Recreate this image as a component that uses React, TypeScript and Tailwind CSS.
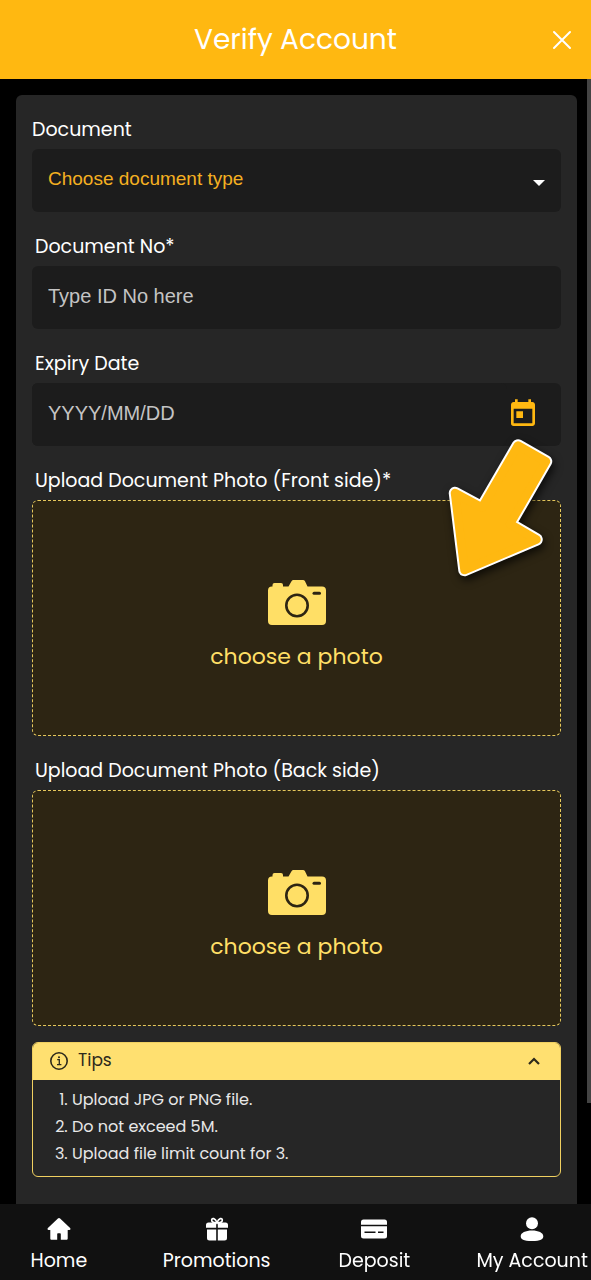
import { useState, type ReactNode } from "react";
import { MdToday } from "react-icons/md";

const CloseIcon = () => (
  <svg className="size-5" viewBox="0 0 20 20" fill="none" stroke="currentColor" strokeWidth="2" strokeLinecap="round">
    <path d="M2 2 18 18M18 2 2 18" />
  </svg>
);

const CameraIcon = () => (
  <svg className="h-[45px] w-[58px]" viewBox="0 0 58 45">
    <path
      fill="currentColor"
      d="M4.500 6.500V5a2 2 0 0 1 2-2h6.500a2 2 0 0 1 2 2v1.500h5.500L23.500 1.200Q24.200 0 25.500 0h9.500Q36.300 0 37 1.200L39.500 6.500H54a4 4 0 0 1 4 4V41a4 4 0 0 1-4 4H4a4 4 0 0 1-4-4V10.500a4 4 0 0 1 4-4Z"
    />
    <circle cx="29" cy="25.500" r="10.700" fill="none" stroke="#2d2513" strokeWidth="2.600" />
    <path d="M46 13.300h5.500" stroke="#2d2513" strokeWidth="3" strokeLinecap="round" />
  </svg>
);

const InfoIcon = () => (
  <svg className="size-[18px]" viewBox="0 0 18 18" fill="none" stroke="currentColor">
    <circle cx="9" cy="9" r="8.200" strokeWidth="1.600" />
    <path d="M7.200 7.700H9.300V12.600M7 12.700h4.400" strokeWidth="1.300" />
    <circle cx="9" cy="5.200" r="1" fill="currentColor" stroke="none" />
  </svg>
);

const HomeIcon = () => (
  <svg className="size-6" viewBox="0 0 24 24" fill="currentColor">
    <path d="M10.900 1.400a1.600 1.600 0 0 1 2.200 0l10 9.700c.8.900.4 1.900-.7 1.900H20.700v8.500c0 .8-.5 1.300-1.300 1.300H13.800V17a.8.800 0 0 0-.8-.8h-2a.8.800 0 0 0-.8.800v5.800H4.600c-.8 0-1.300-.5-1.300-1.300V13H1.600C.5 13 .1 12 .9 11.100Z" />
  </svg>
);

const GiftIcon = () => (
  <svg className="size-6" viewBox="0 0 24 24" fill="currentColor">
    <path d="M3.500 5.500H11.200v5.300H1V8a2.500 2.500 0 0 1 2.500-2.500ZM12.800 5.500h7.700A2.500 2.500 0 0 1 23 8v2.800H12.800ZM2 12.600h9.200v10.900H4.500A2.500 2.500 0 0 1 2 21ZM12.800 12.600H22V21a2.500 2.500 0 0 1-2.500 2.500h-6.700Z" />
    <path
      d="M11.700 5.800C8 6 6.500 4.500 6.700 2.900 7 .9 10 .7 12 5.500 14 .7 17 .9 17.300 2.900 17.500 4.500 16 6 12.300 5.800"
      fill="none"
      stroke="currentColor"
      strokeWidth="1.700"
    />
  </svg>
);

const DepositIcon = () => (
  <svg className="h-6 w-[26px]" viewBox="0 0 26 24" fill="currentColor">
    <path d="M2.500 2.500h21A2.500 2.500 0 0 1 26 5v2.800H0V5a2.500 2.500 0 0 1 2.500-2.500Z" />
    <path d="M0 9.200h26V19a2.500 2.500 0 0 1-2.500 2.500h-21A2.500 2.500 0 0 1 0 19Z" />
    <path d="M3.500 15.300h11M17 15.300h5.500" stroke="#111111" strokeWidth="1.600" />
  </svg>
);

const UserIcon = () => (
  <svg className="size-6" viewBox="0 0 24 24" fill="currentColor">
    <circle cx="12" cy="6.200" r="6" />
    <path d="M12 13.500c6.500 0 11.300 2.300 11.300 5.700 0 2.900-2.500 4.800-11.300 4.800S.7 22.100.7 19.200c0-3.400 4.800-5.700 11.300-5.700Z" />
  </svg>
);

const PointerArrow = () => (
  <svg
    className="pointer-events-none absolute -top-9 right-0 h-40 w-[120px] drop-shadow-[2px_4px_4px_rgba(0,0,0,0.7)]"
    viewBox="441 432 120 160"
    strokeLinejoin="round"
    aria-hidden="true"
  >
    <path d="M518 445.500 546 461.500 510 524 536.500 539.500 464.500 570 455 493 482 507.500Z" fill="#fff" stroke="#fff" strokeWidth="12.500" />
    <path d="M518 445.500 546 461.500 510 524 536.500 539.500 464.500 570 455 493 482 507.500Z" fill="#ffb811" stroke="#ffb811" strokeWidth="8.500" />
  </svg>
);

const navItems = [
  { name: "Home", path: "#home", icon: <HomeIcon /> },
  { name: "Promotions", path: "#promotions", icon: <GiftIcon /> },
  { name: "Deposit", path: "#deposit", icon: <DepositIcon /> },
  { name: "My Account", path: "#account", icon: <UserIcon /> },
];

const tips = ["Upload JPG or PNG file.", "Do not exceed 5M.", "Upload file limit count for 3."];

const fieldClass =
  "block h-[63px] w-full appearance-none rounded-md bg-[#1c1c1c] px-4 pb-0.5 font-['Arial','Liberation_Sans',sans-serif] outline-none placeholder:text-[#c4c4c4]";

const labelClass = "mb-1.5 block text-[19px]/[26px]";

const PhotoUpload = ({ id, label, children }: { id: string; label: string; children?: ReactNode }) => (
  <div className="relative">
    <label htmlFor={id} className={`${labelClass} pl-[3px]`}>
      {label}
    </label>
    <label
      htmlFor={id}
      className="flex h-[236px] cursor-pointer flex-col items-center justify-center gap-4 rounded-md border border-dashed border-[#e5c85c] bg-[#2d2513] pt-4 text-[#ffdf66]"
    >
      <CameraIcon />
      <span className="text-[22px]/8">choose a photo</span>
      <input id={id} type="file" accept="image/png,image/jpeg" className="sr-only" />
    </label>
    {children}
  </div>
);

const App = () => {
  const [showTips, setShowTips] = useState(true);

  return (
    <div className="flex min-h-screen flex-col overflow-x-hidden bg-black font-['Poppins','Inter',sans-serif] text-white">
      <header className="grid h-[79px] grid-cols-[1fr_auto_1fr] items-center bg-[#ffb811] px-[19px]">
        <h1 className="col-start-2 text-[28px]/10">Verify Account</h1>
        <button type="button" aria-label="Close" className="justify-self-end">
          <CloseIcon />
        </button>
      </header>

      <main className="flex flex-1">
        <div className="flex min-w-0 flex-1 pt-4 pr-2.5 pl-4">
          <form className="flex-1 rounded-t-md bg-[#262626] px-4 pt-[22px] pb-[27px]">
            <div className="space-y-[22px]">
              <div>
                <label htmlFor="document" className={labelClass}>
                  Document
                </label>
                <div className="relative">
                  <select id="document" defaultValue="" className={`${fieldClass} text-[19px] text-[#f5b021]`}>
                    <option value="">Choose document type</option>
                    <option value="passport">Passport</option>
                    <option value="id">ID Card</option>
                  </select>
                  <svg className="pointer-events-none absolute top-[31px] right-4 h-1.5 w-3" viewBox="0 0 12 6" fill="#fff">
                    <path d="M0 0h12L6 6Z" />
                  </svg>
                </div>
              </div>

              <div>
                <label htmlFor="documentNo" className={`${labelClass} pl-[3px]`}>
                  Document No*
                </label>
                <input id="documentNo" type="text" placeholder="Type ID No here" className={`${fieldClass} text-xl`} />
              </div>

              <div>
                <label htmlFor="expiry" className={`${labelClass} pl-[3px]`}>
                  Expiry Date
                </label>
                <div className="flex items-center rounded-md bg-[#1c1c1c] pr-[22px]">
                  <input id="expiry" type="text" placeholder="YYYY/MM/DD" className={`${fieldClass} text-xl`} />
                  <button type="button" aria-label="Open calendar" className="pb-0.5 text-[#ffb811]">
                    <MdToday size={32} />
                  </button>
                </div>
              </div>

              <PhotoUpload id="front" label="Upload Document Photo (Front side)*">
                <PointerArrow />
              </PhotoUpload>
              <PhotoUpload id="back" label="Upload Document Photo (Back side)" />
            </div>

            <section className="mt-4 overflow-hidden rounded-md border border-[#f0d060]">
              <button
                type="button"
                aria-expanded={showTips}
                onClick={() => setShowTips(!showTips)}
                className="flex h-[37px] w-full items-center bg-[#ffe070] pr-5 pb-0.5 pl-[17px] text-[#2d2a1c]"
              >
                <InfoIcon />
                <span className="ml-2.5 text-[17px]">Tips</span>
                <svg className="ml-auto h-2 w-3" viewBox="0 0 12 8" fill="none" stroke="currentColor" strokeWidth="2.200">
                  <path d="M1 7 6 2l5 5" />
                </svg>
              </button>
              {showTips && (
                <ol className="list-decimal pt-1.5 pb-[9px] pl-[39px] text-base/[27px] text-[#e8e8e8]">
                  {tips.map((tip) => (
                    <li key={tip}>{tip}</li>
                  ))}
                </ol>
              )}
            </section>
          </form>
        </div>
        {/* scrollbar */}
        <div className="w-1">
          <div className="h-[91%] bg-[#444444]" />
        </div>
      </main>

      <nav className="sticky bottom-0 h-[76px] bg-[#111111]">
        <div className="-mx-5 grid grid-cols-4 pt-[13px]">
          {navItems.map((item) => (
            <a key={item.name} href={item.path} className="flex flex-col items-center gap-1.5 text-[19px]/[28px] whitespace-nowrap">
              {item.icon}
              {item.name}
            </a>
          ))}
        </div>
      </nav>
    </div>
  );
};

export default App;
